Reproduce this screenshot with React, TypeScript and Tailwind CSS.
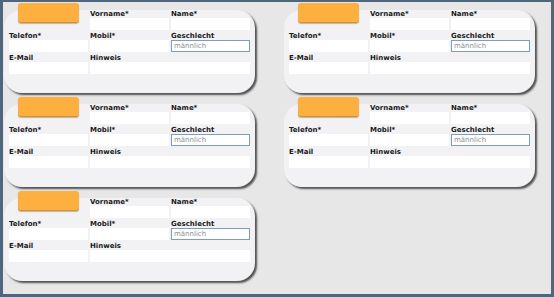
import React from "react";

const font = { fontFamily: "'DejaVu Sans', Verdana, sans-serif" };

function Field({ label, wide, select }: { label: string; wide?: boolean; select?: boolean }) {
  return (
    <div className={wide ? "col-span-2" : ""}>
      <div className="h-[8px] text-[7px] leading-[8px] font-bold text-[#1a1a1a] whitespace-nowrap">{label}</div>
      {select ? (
        <div className="h-[12px] bg-white border border-[#7f9db9] text-[7px] leading-[10px] text-[#8c8c8c] pl-[2px]">
          männlich
        </div>
      ) : (
        <div className="h-[12px] bg-white" />
      )}
    </div>
  );
}

function PersonCard() {
  return (
    <div className="relative pt-[7px]">
      <div className="absolute left-[14px] top-0 z-10 w-[61px] h-[20px] rounded-[3px] bg-[#fdb03f] border-b border-[#d98f26] shadow-[0_1px_1px_rgba(0,0,0,0.25)]" />
      <div className="h-[83px] rounded-[18px] bg-[#f2f2f4] shadow-[2px_2px_2px_rgba(0,0,0,0.65)] pl-[5px]">
        <div className="grid grid-cols-[79px_79px_79px] gap-x-[2px] gap-y-[2px]">
          <div />
          <Field label="Vorname*" />
          <Field label="Name*" />
          <Field label="Telefon*" />
          <Field label="Mobil*" />
          <Field label="Geschlecht" select />
          <Field label="E-Mail" />
          <Field label="Hinweis" wide />
        </div>
      </div>
    </div>
  );
}

export default function App() {
  return (
    <div
      className="w-[554px] h-[297px] bg-[#e7e7e7] border-[#50667f] border-l-[3px] border-r-[3px] border-b-[3px] border-t-[2px] pl-[1px] pt-[1px] overflow-hidden"
      style={font}
    >
      <div className="grid grid-cols-[251px_251px] gap-x-[29px] gap-y-[4px]">
        <PersonCard />
        <PersonCard />
        <PersonCard />
        <PersonCard />
        <PersonCard />
      </div>
    </div>
  );
}
